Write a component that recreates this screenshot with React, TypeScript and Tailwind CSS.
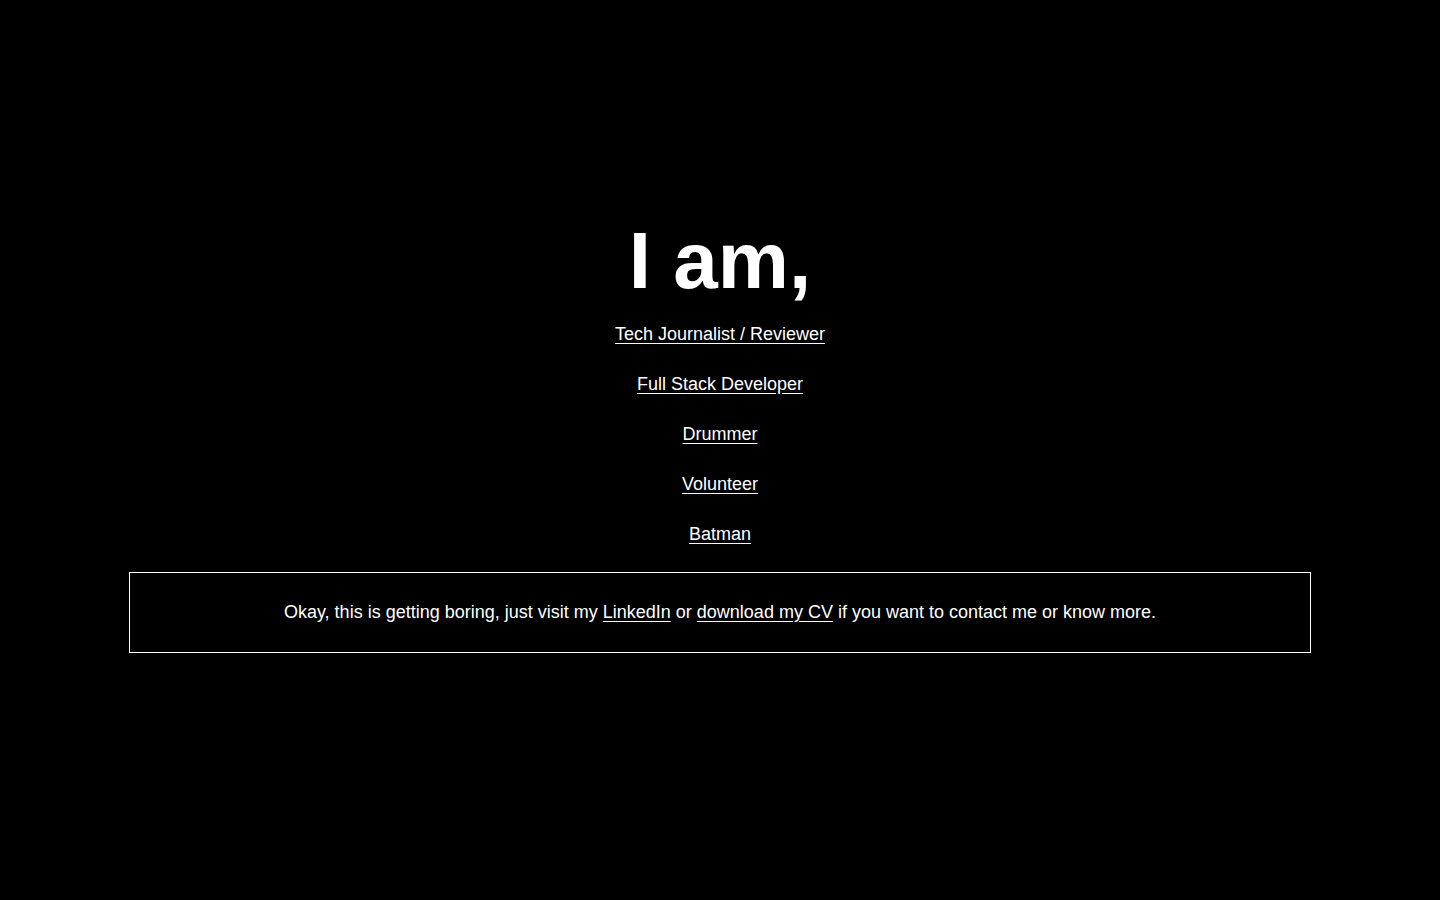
export default function App() {
  const roles = ['Tech Journalist / Reviewer', 'Full Stack Developer', 'Drummer', 'Volunteer', 'Batman'];

  return (
    <div className="min-h-screen bg-black text-white antialiased font-['Liberation_Sans',Arial,sans-serif]">
      <div className="flex flex-col items-center pt-[221px]">
        <h1 className="text-[80px] leading-[80px] font-bold">I am,</h1>
        <div className="mt-[8px] flex flex-col items-center">
          {roles.map((role) => (
            <a key={role} href="#" className="text-[18px] leading-[50px] underline underline-offset-[3px]">
              {role}
            </a>
          ))}
        </div>
        <div className="mt-[13px] w-[1182px] h-[81px] border border-white flex items-center justify-center text-[18px]">
          <p>
            Okay, this is getting boring, just visit my{' '}
            <a href="#" className="underline underline-offset-[3px]">LinkedIn</a> or{' '}
            <a href="#" className="underline underline-offset-[3px]">download my CV</a> if you want to contact me or know more.
          </p>
        </div>
      </div>
    </div>
  );
}
